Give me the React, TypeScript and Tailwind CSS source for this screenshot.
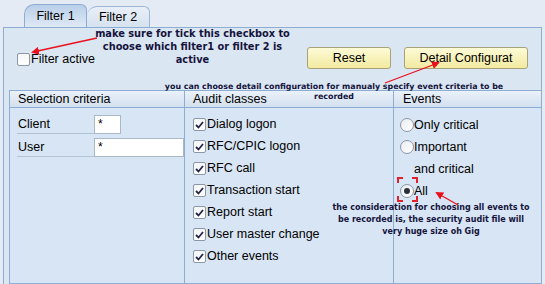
import React from "react"

const ui = { fontFamily: "'Liberation Sans', Arial, sans-serif" }
const note = { fontFamily: "'DejaVu Sans', Verdana, sans-serif" }

function Check({ on }: { on?: boolean }) {
  return (
    <span className="w-[13px] h-[13px] border border-[#8b97a6] rounded-[2px] bg-gradient-to-b from-[#f4f6f8] to-[#ffffff] flex items-center justify-center shrink-0">
      {on && (
        <svg width="9" height="8" viewBox="0 0 9 8">
          <path d="M1 4 L3.5 6.5 L8 1" fill="none" stroke="#26264a" strokeWidth="1.8" />
        </svg>
      )}
    </span>
  )
}

function Radio({ on }: { on?: boolean }) {
  return (
    <span className="w-[14px] h-[14px] rounded-full border border-[#8b97a6] bg-gradient-to-br from-[#e9edf2] to-[#ffffff] flex items-center justify-center shrink-0">
      {on && <span className="w-[6px] h-[6px] rounded-full bg-[#2b2f3a]" />}
    </span>
  )
}

const audit = [
  "Dialog logon",
  "RFC/CPIC logon",
  "RFC call",
  "Transaction start",
  "Report start",
  "User master change",
  "Other events",
]

export default function App() {
  return (
    <div className="relative w-[545px] h-[284px] overflow-hidden bg-[#e4ebf5] text-[12px] text-black" style={ui}>
      {/* tabs */}
      <div className="h-[27px] flex items-end pl-[24px]">
        <div className="w-[63px] h-[23px] rounded-t-[6px] rounded-tl-[10px] border border-b-0 border-[#8eadd3] bg-gradient-to-b from-[#b9cfe9] to-[#dfe9f5] flex items-center justify-center text-[12.5px]">
          Filter 1
        </div>
        <div className="w-[63px] h-[21px] rounded-t-[6px] rounded-tl-[10px] border border-b-0 border-l-0 border-[#9db6d6] bg-gradient-to-b from-[#e9eff7] to-[#d6e2f0] flex items-center justify-center text-[12.5px]">
          Filter 2
        </div>
      </div>

      {/* panel */}
      <div className="mx-[3px] h-[257px] border border-b-0 border-[#8eadd3] bg-[#dbe6f3] flex flex-col">
        <div className="h-[62px] flex items-start">
          <label className="flex items-center gap-[1px] pl-[13px] pt-[22px]">
            <Check />
            <span className="text-[12.5px]">Filter active</span>
          </label>
          <div className="flex-1" />
          <div className="flex gap-[13px] pt-[19px] pr-[13px]">
            <button className="w-[84px] h-[22px] rounded-[3px] border border-[#a8a27a] bg-gradient-to-b from-[#fdfbd6] to-[#f3e9a0] text-[12.5px]">
              Reset
            </button>
            <button className="w-[124px] h-[22px] rounded-[3px] border border-[#a8a27a] bg-gradient-to-b from-[#fdfbd6] to-[#f3e9a0] text-[12.5px]">
              Detail Configurat
            </button>
          </div>
        </div>

        {/* group box */}
        <div className="ml-[5px] flex-1 border border-r-0 border-[#8eadd3] bg-[#d8e5f4] flex flex-col">
          <div className="h-[17px] flex border-b border-[#8eadd3] bg-gradient-to-b from-[#eaf1f9] to-[#d3e0ef]">
            <div className="w-[175px] pl-[8px] border-r border-[#8eadd3] leading-[16px] text-[12.5px]">Selection criteria</div>
            <div className="w-[209px] pl-[8px] border-r border-[#8eadd3] leading-[16px] text-[12.5px]">Audit classes</div>
            <div className="flex-1 pl-[9px] leading-[16px] text-[12.5px]">Events</div>
          </div>
          <div className="flex-1 flex">
            <div className="w-[175px] border-r border-[#8eadd3] pl-[7px] pt-[7px] flex flex-col gap-[4px]">
              <div className="flex items-end">
                <span className="w-[77px] h-[19px] border-b border-[#b3c3d6] pl-[1px] text-[12.5px] leading-[19px]">Client</span>
                <span className="w-[27px] h-[19px] border border-[#a9b8c8] bg-white pl-[3px] leading-[17px]">*</span>
              </div>
              <div className="flex items-end">
                <span className="w-[77px] h-[19px] border-b border-[#b3c3d6] pl-[1px] text-[12.5px] leading-[19px]">User</span>
                <span className="w-[90px] h-[19px] border border-[#a9b8c8] bg-white pl-[3px] leading-[17px]">*</span>
              </div>
            </div>
            <div className="w-[209px] border-r border-[#8eadd3] pl-[8px] pt-[10px] flex flex-col gap-[9px]">
              {audit.map((a) => (
                <div key={a} className="flex items-center gap-[1px] h-[13px] text-[12.5px]">
                  <Check on />
                  <span>{a}</span>
                </div>
              ))}
            </div>
            <div className="flex-1 pl-[6px] pt-[10px] flex flex-col gap-[8px] text-[12.5px]">
              <div className="flex items-center h-[14px]">
                <Radio />
                <span>Only critical</span>
              </div>
              <div className="flex items-center h-[14px]">
                <Radio />
                <span>Important</span>
              </div>
              <div className="h-[14px] pl-[14px] leading-[14px]">and critical</div>
              <div className="flex items-center h-[14px] relative">
                <Radio on />
                <span>All</span>
                <span className="absolute left-[-3px] top-[-7px] w-[6px] h-[6px] border-l-2 border-t-2 border-[#e0202a]" />
                <span className="absolute left-[12px] top-[-7px] w-[6px] h-[6px] border-r-2 border-t-2 border-[#e0202a]" />
                <span className="absolute left-[-3px] top-[12px] w-[6px] h-[6px] border-l-2 border-b-2 border-[#e0202a]" />
                <span className="absolute left-[12px] top-[12px] w-[6px] h-[6px] border-r-2 border-b-2 border-[#e0202a]" />
              </div>
            </div>
          </div>
        </div>
      </div>

      {/* annotations */}
      <div className="absolute left-[70px] top-[27px] w-[245px] text-center font-bold text-[9.8px] leading-[13px] text-[#14143c]" style={note}>
        make sure for tick this checkbox to<br />choose which filter1 or filter 2 is<br />active
      </div>
      <div className="absolute left-[124px] top-[82px] w-[420px] text-center font-bold text-[7.9px] leading-[10px] text-[#14143c] whitespace-nowrap" style={note}>
        you can choose detail configuration for manualy specify event criteria to be<br />recorded
      </div>
      <div className="absolute left-[321px] top-[202px] w-[220px] text-center font-bold text-[8px] leading-[12px] text-[#14143c] whitespace-nowrap" style={note}>
        the consideration for choosing all events to<br />be recorded is, the security audit file will<br />very huge size oh Gig
      </div>

      <svg className="absolute left-0 top-0 pointer-events-none" width="545" height="284">
        <defs>
          <marker id="ah" markerWidth="8" markerHeight="8" refX="6" refY="4" orient="auto" markerUnits="userSpaceOnUse">
            <path d="M0 0 L8 4 L0 8 Z" fill="#e8101c" />
          </marker>
        </defs>
        <line x1="97" y1="38" x2="33" y2="52" stroke="#e8101c" strokeWidth="1.3" markerEnd="url(#ah)" />
        <line x1="385" y1="83" x2="438" y2="63" stroke="#e8101c" strokeWidth="1.3" markerEnd="url(#ah)" />
        <line x1="458" y1="205" x2="437" y2="193" stroke="#e8101c" strokeWidth="1.3" markerEnd="url(#ah)" />
      </svg>
    </div>
  )
}
